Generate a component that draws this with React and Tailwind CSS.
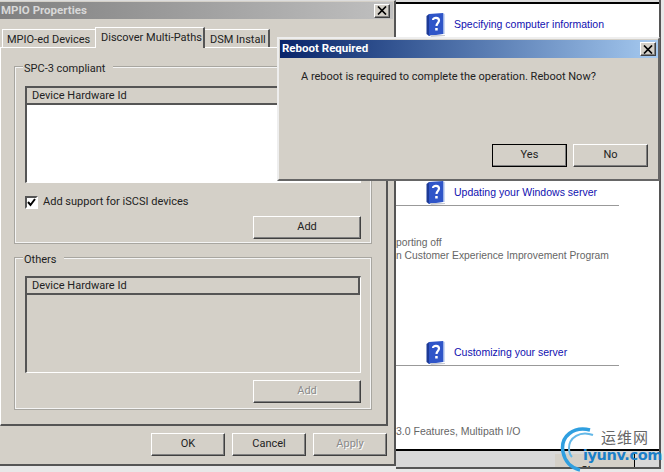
import React from 'react';

const raised = 'border border-t-white border-l-white border-r-[#404040] border-b-[#404040] shadow-[inset_-1px_-1px_0_#808080]';

const CloseButton = () => (
  <div className={`w-[16px] h-[14px] bg-[#d4d0c8] ${raised} flex items-center justify-center`}>
    <svg width="10" height="9" viewBox="0 0 10 9">
      <path d="M1 0.5 L9 8.5 M9 0.5 L1 8.5" stroke="#000" strokeWidth="1.7" />
    </svg>
  </div>
);

const Button = ({ label, width = 'w-[75px]', disabled, isDefault, className = '' }) => (
  <div
    className={`${width} h-[23px] flex items-center justify-center bg-[#d4d0c8] text-[11px] ${raised} ${
      disabled ? 'text-[#8a8a8a] [text-shadow:1px_1px_0_#fff]' : 'text-[#222]'
    } ${isDefault ? 'outline outline-1 -outline-offset-1 outline-black' : ''} ${className}`}
  >
    {label}
  </div>
);

const GroupBox = ({ title, className, children }) => (
  <div className={`ml-[14px] mr-[15px] border border-[#f4f4f4] shadow-[0_0_0_1px_#a8a6a0] px-[9px] ${className}`}>
    <div className="-mt-[7px] ml-[-2px] w-fit bg-[#d4d0c8] pr-2 pl-[1px] text-[11px] leading-[16px] text-[#222]">{title}</div>
    {children}
  </div>
);

const ListView = ({ white }) => (
  <div className={`h-[97px] border border-r-white border-b-white border-t-[#555] border-l-[#555] border-t-2 border-l-2 ${white ? 'bg-white' : 'bg-[#d4d0c8]'}`}>
    <div className="h-[17px] bg-[#d4d0c8] border-b-2 border-r-2 border-[#555] pl-[5px] text-[11px] leading-[16px] text-[#222]">
      Device Hardware Id
    </div>
  </div>
);

const HelpBook = () => (
  <svg width="20" height="24" viewBox="0 0 20 24" className="shrink-0">
    <path d="M3 1 L17 0 L17 21 L3 23 Z" fill="#2f55c8" />
    <path d="M0.5 3 L3 1 L3 23 L0.5 21 Z" fill="#1d3a96" />
    <path d="M17 0 L18.5 1 L18.5 21 L17 21 Z" fill="#9db4e8" />
    <path d="M4 22 L19 22 L19 23 L5 24 Z" fill="#c9ccd4" />
    <path d="M7 7 C7 4 13 4 13 7.5 C13 10 10.5 10 10.5 13" fill="none" stroke="#fff" strokeWidth="2.2" />
    <rect x="9.2" y="15" width="2.5" height="2.5" fill="#fff" />
  </svg>
);

const HelpRow = ({ label, className }) => (
  <div className={`flex items-center h-[24px] pl-[30px] gap-[8px] ${className}`}>
    <HelpBook />
    <span className="font-['Liberation_Sans',sans-serif] text-[10.5px] text-[#1010b0] whitespace-nowrap">{label}</span>
  </div>
);

const Watermark = () => (
  <div className="absolute left-[560px] top-[424px] w-[104px] h-[48px]">
    <svg width="34" height="48" viewBox="0 0 34 48" className="absolute left-0 top-0">
      <path d="M30 6 C14 2 0 12 3 28 C5 38 12 44 20 46" fill="none" stroke="#2f9fe0" strokeWidth="3.5" />
      <path d="M33 11 C20 6 9 14 9 24 C9 28 10 31 12 33" fill="none" stroke="#63b8e8" strokeWidth="2" />
    </svg>
    <div className="absolute left-[41px] top-[3px] text-[15px] leading-[20px] tracking-[1px] text-[#666] font-['Noto_Sans_CJK_SC',sans-serif] whitespace-nowrap">运维网</div>
    <div className="absolute left-[23px] top-[22px] text-[14.5px] leading-[18px] font-bold text-[#1a7fc8] font-['DejaVu_Sans',sans-serif] tracking-[-0.4px] whitespace-nowrap">iyunv.com</div>
  </div>
);

export default function App() {
  return (
    <div className="relative w-[664px] h-[472px] overflow-hidden bg-[#e8e8e8] font-['Roboto',sans-serif]">
      {/* help window behind */}
      <div className="absolute left-[396px] top-0 w-[265px] h-[469px] flex flex-col bg-white border-r-2 border-b-2 border-[#555] overflow-hidden">
        <div className="h-[2px] bg-[#ddd] shrink-0" />
        <div className="h-[2px] bg-black shrink-0" />
        <HelpRow label="Specifying computer information" className="mt-[9px]" />
        <HelpRow label="Updating your Windows server" className="mt-[144px]" />
        <div className="h-px w-[223px] bg-[#999] shrink-0" />
        <div className="mt-[30px] font-['Liberation_Sans',sans-serif] text-[10.3px] leading-[13px] text-[#666] whitespace-nowrap">porting off</div>
        <div className="font-['Liberation_Sans',sans-serif] text-[10.3px] leading-[13px] text-[#666] whitespace-nowrap">n Customer Experience Improvement Program</div>
        <HelpRow label="Customizing your server" className="mt-[79px]" />
        <div className="h-px w-[223px] bg-[#999] shrink-0" />
        <div className="mt-[58px] font-['Liberation_Sans',sans-serif] text-[10.5px] leading-[14px] text-[#666] whitespace-nowrap">3.0 Features, Multipath I/O</div>
        <div className="h-[2px] bg-black mt-[11px] shrink-0" />
        <div className="flex-1 bg-[#d8d8d8] flex justify-end pr-[24px] pt-[3px]">
          <div className="w-[80px] h-[30px] bg-[#d4d0c8] border-r border-black text-[11px] text-center pt-[10px] leading-[14px]">Close</div>
        </div>
      </div>

      {/* MPIO Properties */}
      <div className="absolute left-[-2px] top-0 w-[398px] h-[466px] bg-[#d4d0c8] border-t border-r-2 border-b-2 border-t-[#ddd] border-r-[#555] border-b-[#555] flex flex-col">
        <div className="mt-[1px] h-[17px] mx-[1px] flex items-center justify-between pr-[3px] bg-gradient-to-r from-[#808080] to-[#c0c0c0]">
          <span className="font-bold text-[11.5px] text-[#d8d8d8] ml-[2px] whitespace-nowrap">MPIO Properties</span>
          <CloseButton />
        </div>

        {/* tabs */}
        <div className="mt-[8px] h-[20px] flex items-end pl-[4px] text-[11px] text-[#222] relative z-10">
          <div className="w-[93px] h-[18px] border-t border-l border-white pl-[4px] leading-[19px] whitespace-nowrap">MPIO-ed Devices</div>
          <div className="w-[110px] h-[21px] -mb-px bg-[#d4d0c8] border-t border-l border-white border-r-2 border-r-[#555] pl-[5px] leading-[19px] whitespace-nowrap">Discover Multi-Paths</div>
          <div className="w-[65px] h-[18px] border-t border-white border-r-2 border-r-[#555] pl-[5px] leading-[19px] whitespace-nowrap">DSM Install</div>
        </div>

        {/* tab page */}
        <div className="ml-[2px] w-[388px] h-[379px] border-t border-l border-r-2 border-b-2 border-t-white border-l-white border-r-[#555] border-b-[#555] pt-[19px]">
          <GroupBox title="SPC-3 compliant" className="h-[176px]">
            <div className="mt-[9px]">
              <ListView white />
            </div>
            <div className="mt-[13px] h-[13px] flex items-center gap-[5px] text-[11px] text-[#222]">
              <div className="w-[13px] h-[13px] bg-white border-2 border-[#555] border-r-white border-b-white flex items-center justify-center">
                <svg width="9" height="9" viewBox="0 0 9 9">
                  <path d="M1 4 L3.5 7 L8 1" fill="none" stroke="#000" strokeWidth="2" />
                </svg>
              </div>
              Add support for iSCSI devices
            </div>
            <div className="mt-[7px] flex justify-end">
              <Button label="Add" width="w-[108px]" />
            </div>
          </GroupBox>
          <GroupBox title="Others" className="h-[151px] mt-[15px]">
            <div className="mt-[8px]">
              <ListView />
            </div>
            <div className="mt-[7px] flex justify-end">
              <Button label="Add" width="w-[108px]" disabled />
            </div>
          </GroupBox>
        </div>

        <div className="mt-[7px] flex justify-end gap-[7px] pr-[7px]">
          <Button label="OK" width="w-[74px]" />
          <Button label="Cancel" width="w-[74px]" />
          <Button label="Apply" width="w-[74px]" disabled />
        </div>
      </div>

      {/* Reboot Required */}
      <div className="absolute left-[277px] top-[37px] w-[383px] h-[144px] bg-[#d4d0c8] border-2 border-t-[#eee] border-l-[#eee] border-r-[#666] border-b-[#666] flex flex-col">
        <div className="mt-[1px] ml-[1px] h-[18px] flex items-center justify-between pr-[2px] bg-gradient-to-r from-[#0a246a] to-[#a6caf0]">
          <span className="font-bold text-[11.5px] text-white pl-[2px]">Reboot Required</span>
          <CloseButton />
        </div>
        <div className="mt-[11px] pl-[22px] text-[11px] leading-[16px] text-[#222] whitespace-nowrap">
          A reboot is required to complete the operation. Reboot Now?
        </div>
        <div className="mt-[59px] flex justify-end gap-[6px] pr-[10px]">
          <Button label="Yes" isDefault />
          <Button label="No" />
        </div>
      </div>

      <Watermark />
    </div>
  );
}
